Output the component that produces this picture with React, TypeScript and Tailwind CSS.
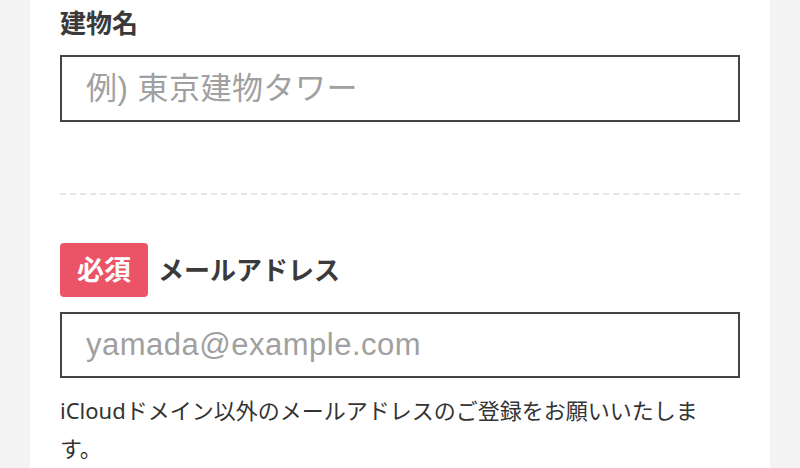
export default function App() {
  return (
    <div className="min-h-screen bg-[#f3f3f3] px-[30px] font-['Noto_Sans','Noto_Sans_CJK_JP',sans-serif] text-[#333]">
      <div className="h-[468px] overflow-hidden bg-white px-[30px] pt-[5px]">
        {/* building name */}
        <label className="block text-[26px] font-bold leading-[36px] text-[#3a3a3a]">
          建物名
        </label>
        <input
          type="text"
          placeholder="例) 東京建物タワー"
          className="mt-[14px] block h-[67px] w-full border-2 border-[#444] bg-white pl-[24px] font-['Liberation_Sans','Noto_Sans_CJK_JP',sans-serif] text-[31px] tracking-[0.5px] outline-none placeholder:text-[#a0a0a0]"
        />

        <div className="mt-[71px] border-t-2 border-dashed border-[#e6e6e6]" />

        {/* email */}
        <div className="mt-[48px] flex items-center">
          <span className="flex h-[54px] w-[88px] items-center justify-center rounded-[4px] bg-[#eb5366] text-[27px] font-bold text-white">
            必須
          </span>
          <label className="ml-[10px] text-[26px] font-bold text-[#3a3a3a]">
            メールアドレス
          </label>
        </div>
        <input
          type="email"
          placeholder="yamada@example.com"
          className="mt-[15px] block h-[66px] w-full border-2 border-[#444] bg-white pl-[24px] font-['Liberation_Sans','Noto_Sans_CJK_JP',sans-serif] text-[31px] tracking-[0.5px] outline-none placeholder:text-[#a0a0a0]"
        />
        <p className="mt-[13px] text-[22px] leading-[38px]">
          <span className="whitespace-nowrap">iCloudドメイン以外のメールアドレスのご登録をお願いいたしま</span>
          <br />
          す。
        </p>
      </div>
    </div>
  );
}
